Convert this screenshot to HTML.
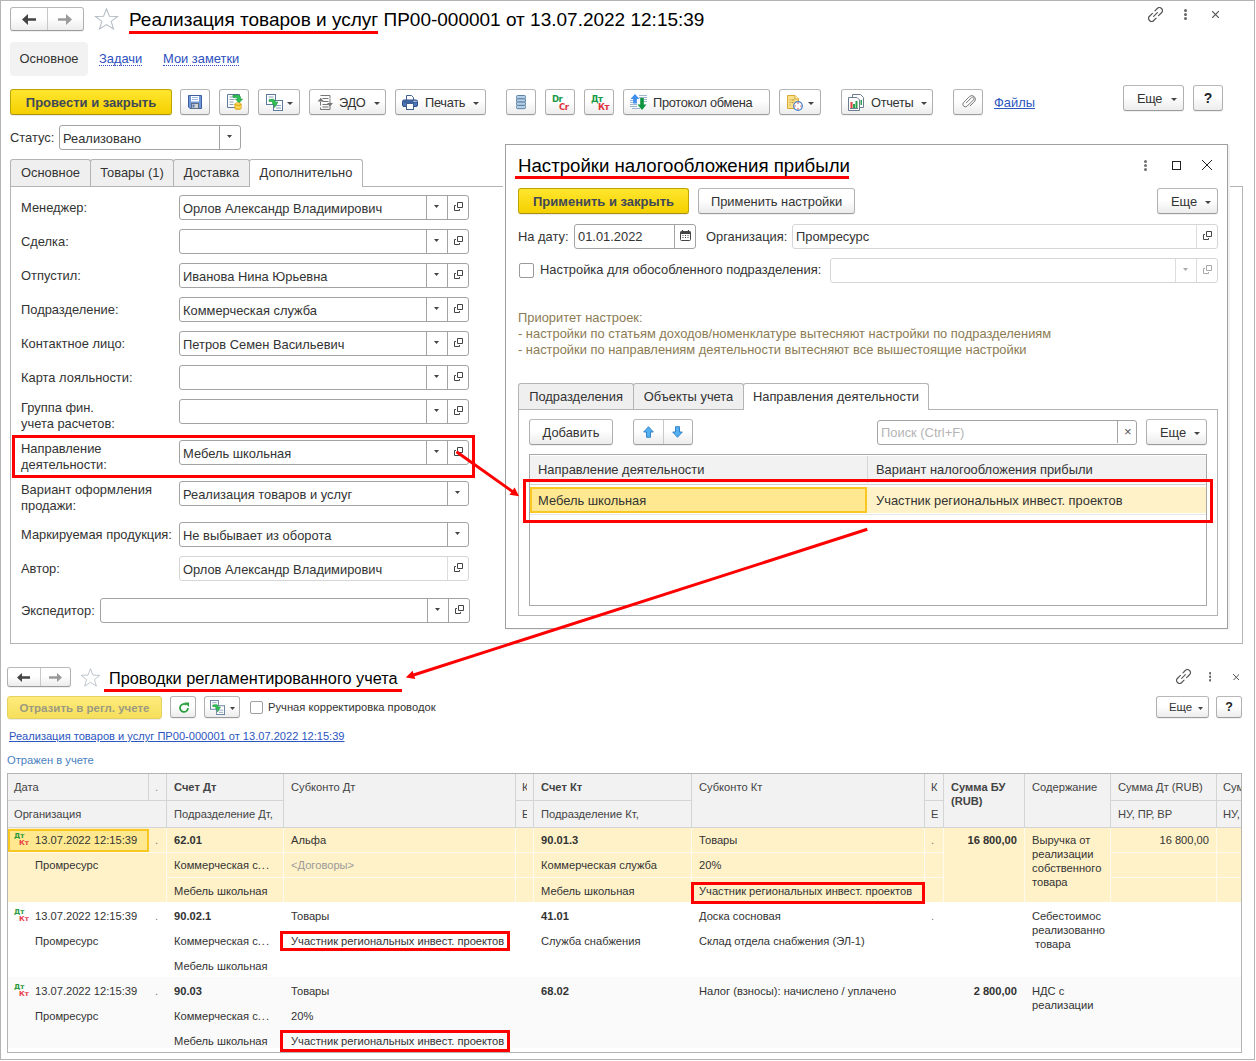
<!DOCTYPE html><html lang="ru"><head><meta charset="utf-8"><title>1C</title><style>
*{box-sizing:border-box;margin:0;padding:0}
html,body{width:1256px;height:1061px;background:#fff;overflow:hidden}
body{font-family:"Liberation Sans",sans-serif;font-size:12.9px;color:#333;position:relative}
.a{position:absolute;white-space:nowrap}
.frame{left:0;top:0;width:1255px;height:1060px;border:1px solid #b4b4b4}
.btn{border:1px solid #b0b0b0;border-top-color:#b8b8b8;border-bottom-color:#9c9c9c;border-radius:3px;background:linear-gradient(#fff,#fff 45%,#ececec);box-shadow:0 1px 0 rgba(0,0,0,.06);text-align:center;color:#333}
.ybtn{border:1px solid #bfa300;border-radius:3px;background:linear-gradient(#ffe62e,#f5d000);box-shadow:0 1px 0 rgba(0,0,0,.08);border-bottom-color:#a89010;text-align:center;font-weight:bold;font-size:13px;color:#3f4858}
.inp{border:1px solid #a8a8a8;border-radius:3px;background:#fff}
.inp .t{position:absolute;left:3px;top:1px;line-height:22px}
.sep{position:absolute;top:0;bottom:0;width:1px;background:#c4c4c4}
.lnk{color:#2c56c0;text-decoration:underline}
.dlnk{color:#2c50c0;border-bottom:1px dotted #2c50c0;line-height:13px}
.tab{border:1px solid #b4b4b4;border-bottom:none;border-radius:3px 3px 0 0;background:#efefef;text-align:center;line-height:25px}
.tab.act{background:#fff}
.red{border:3px solid #ff0000}
.arr{position:absolute;width:0;height:0;border-left:3.5px solid transparent;border-right:3.5px solid transparent;border-top:4px solid #555}
</style></head><body>
<div class="a frame"></div>
<div class="a btn" style="left:10px;top:7px;width:74px;height:24px;"><span class="sep" style="left:36px;background:#c8c8c8"></span><svg class="a" style="left:11px;top:6px" width="14" height="11" viewBox="0 0 14 11"><path d="M0 5.5L6.0 0V4.3H14V6.7H6.0V11z" fill="#444"/></svg><svg class="a" style="left:47px;top:6px" width="14" height="11" viewBox="0 0 14 11"><path d="M0 5.5L6.0 0V4.3H14V6.7H6.0V11z" fill="#9a9a9a" transform="translate(14,0) scale(-1,1)"/></svg></div>
<svg class="a" style="left:94px;top:8px" width="25" height="22" viewBox="0 0 24 22" preserveAspectRatio="none"><path d="M12 0.800l2.800 7.400 7.900 0.300-6.200 4.900 2.200 7.600L12 16.600 5.300 21l2.200-7.600L1.300 8.500l7.900-0.300z" fill="#fff" stroke="#b4bcc4" stroke-width="1"/></svg>
<div class="a " style="left:129px;top:8px;font-size:19px;line-height:24px;color:#000">Реализация товаров и услуг ПР00-000001 от 13.07.2022 12:15:39</div>
<div class="a " style="left:129px;top:31px;width:249px;height:3px;background:#ff0000"></div>
<svg class="a" style="left:1148px;top:7px" width="15" height="15" viewBox="-1 -1 17 17"><g transform="translate(7.5,7.5) rotate(-45)" fill="none" stroke="#555" stroke-width="1.38" stroke-linecap="round"><path d="M-1.500 -3.400H-6.200A3.400 3.400 0 0 0 -6.200 3.400H-2.500"/><path d="M1.500 3.400H6.200A3.400 3.400 0 0 0 6.200 -3.400H2.500"/><path d="M-3 0H3"/></g></svg>
<svg class="a" style="left:1184px;top:9.2px" width="3.0" height="11.0" viewBox="0 0 3.0 11.0"><circle cx="1.5" cy="1.5" r="1.5" fill="#666"/><circle cx="1.5" cy="5.5" r="1.5" fill="#666"/><circle cx="1.5" cy="9.5" r="1.5" fill="#666"/></svg>
<svg class="a" style="left:1212px;top:11px" width="7" height="7" viewBox="0 0 7 7"><path d="M0 0L7 7M7 0L0 7" stroke="#555" stroke-width="1.2"/></svg>
<div class="a " style="left:10px;top:42px;width:78px;height:34px;background:#f2f2f2;border-radius:4px;text-align:center;line-height:34px;color:#333">Основное</div>
<div class="a dlnk" style="left:99px;top:52px;">Задачи</div>
<div class="a dlnk" style="left:163px;top:52px;">Мои заметки</div>
<div class="a ybtn" style="left:10px;top:89px;width:162px;height:26px;line-height:25px">Провести и закрыть</div>
<div class="a btn" style="left:180px;top:89px;width:30px;height:26px;"><svg class="a" style="left:7px;top:5px" width="14" height="14" viewBox="0 0 14 14"><path d="M0.500 0.500h13v13h-11.500l-1.500-1.500z" fill="#6f98d8" stroke="#3d5f9e"/><rect x="3" y="1" width="8" height="5.500" fill="#fff"/><path d="M4 2.500h6M4 4.500h6" stroke="#9db8e4" stroke-width="1"/><rect x="3.500" y="8.500" width="7" height="5" fill="#d4d4d4" stroke="#5f6f85" stroke-width="1"/><rect x="4.500" y="9.500" width="2" height="3" fill="#5a7ab8"/></svg></div>
<div class="a btn" style="left:219px;top:89px;width:30px;height:26px;"><svg class="a" style="left:7px;top:4px" width="16" height="16" viewBox="0 0 16 16"><path d="M0.5 0.5h12v13h-12z" fill="#fff" stroke="#5d7a9e"/><path d="M2.5 3h4M2.5 5.5h5M2.5 8h4M2.5 10.500h4" stroke="#8aa0b8" stroke-width="1"/><path d="M6 1h4.500c2 0 3 1.200 3 3v1h2l-3.500 4-3.500-4h2v-0.800c0-0.500-0.300-0.700-0.800-0.700H6z" fill="#2fc053" stroke="#16903a" stroke-width="0.600"/><ellipse cx="11" cy="10" rx="3.200" ry="1.300" fill="#ffe070" stroke="#d4a010" stroke-width="0.700"/><path d="M7.800 10v4.200c0 0.800 1.500 1.400 3.200 1.400s3.200-0.600 3.200-1.400V10c0 0.700-1.500 1.300-3.200 1.300S7.800 10.700 7.800 10z" fill="#f6c62c" stroke="#d4a010" stroke-width="0.700"/><path d="M7.800 12c0 0.700 1.500 1.300 3.200 1.300s3.200-0.600 3.200-1.300" fill="none" stroke="#fff0a0" stroke-width="0.700"/></svg></div>
<div class="a btn" style="left:258px;top:89px;width:42px;height:26px;"><svg class="a" style="left:7px;top:4px" width="17" height="17" viewBox="0 0 17 17"><rect x="0.500" y="0.500" width="9" height="10" fill="#fff" stroke="#5d7a9e"/><path d="M2.500 3h5" stroke="#8aa0b8"/><rect x="7.500" y="6.500" width="9" height="10" fill="#fff" stroke="#5d7a9e"/><path d="M10 11.500h5M10 14h5" stroke="#8aa0b8"/><path d="M3.500 5h3c2 0 3 1 3 3v0.500h2.500l-4 5v-2.500c0 0-1.500 0.200-1.500-2V8c0-0.500-0.300-1-1-1h-2z" fill="#2fc053" stroke="#16903a" stroke-width="0.600" transform="rotate(-8 8 9)"/></svg><svg class="a" style="left:28px;top:12px" width="6" height="3" viewBox="0 0 6 3"><path d="M0 0h6l-3 3z" fill="#444"/></svg></div>
<div class="a btn" style="left:309px;top:89px;width:77px;height:26px;"><svg class="a" style="left:6px;top:5px" width="17" height="15" viewBox="0 0 17 15"><g fill="none" stroke="#777" stroke-width="1"><path d="M4.500 0.500h9.500v3"/><path d="M14 10.500v4h-9.500v-2"/><path d="M4.500 3v3"/><path d="M6.500 3.500h6M6.500 6.500h6M6.500 9.500h6M6.500 12h6"/></g><path d="M1.500 6.500h6.500l-3.250-3.500z" fill="#777"/><path d="M4.500 6.500v4" stroke="#777"/><path d="M11 8h6l-3 3.500z" fill="#777"/><path d="M14 4v4" stroke="#777"/></svg><span class="a" style="left:29px;top:4px;line-height:16px;font-size:12.8px;margin-top:1px;letter-spacing:-0.3px">ЭДО</span><svg class="a" style="left:64px;top:12px" width="6" height="3" viewBox="0 0 6 3"><path d="M0 0h6l-3 3z" fill="#444"/></svg></div>
<div class="a btn" style="left:395px;top:89px;width:91px;height:26px;"><svg class="a" style="left:6px;top:5px" width="16" height="15" viewBox="0 0 16 15"><path d="M4.500 5v-4.500h5l2 2v2.500" fill="#fff" stroke="#3f5f8f"/><rect x="0.500" y="5" width="15" height="6.500" rx="1.500" fill="#4f78b8" stroke="#2f4f85"/><path d="M1.500 7h13" stroke="#2f4f85" stroke-width="1"/><rect x="11.500" y="5.800" width="1.200" height="1" fill="#fff"/><rect x="13.300" y="5.800" width="1.200" height="1" fill="#fff"/><rect x="4.500" y="8.500" width="7" height="6" fill="#fff" stroke="#3f5f8f"/></svg><span class="a" style="left:29px;top:4px;line-height:16px;font-size:12.8px;margin-top:1px;letter-spacing:-0.3px">Печать</span><svg class="a" style="left:77px;top:12px" width="6" height="3" viewBox="0 0 6 3"><path d="M0 0h6l-3 3z" fill="#444"/></svg></div>
<div class="a btn" style="left:506px;top:89px;width:30px;height:26px;"><svg class="a" style="left:9px;top:5px" width="10" height="14.5" viewBox="0 0 10 14.5"><rect x="0.500" y="0.5" width="9" height="3.300" rx="1" fill="#b5cfe6" stroke="#5d80a5" stroke-width="1"/><rect x="0.500" y="3.8" width="9" height="3.300" rx="1" fill="#b5cfe6" stroke="#5d80a5" stroke-width="1"/><rect x="0.500" y="7.1" width="9" height="3.300" rx="1" fill="#b5cfe6" stroke="#5d80a5" stroke-width="1"/><rect x="0.500" y="10.4" width="9" height="3.300" rx="1" fill="#b5cfe6" stroke="#5d80a5" stroke-width="1"/></svg></div>
<div class="a btn" style="left:545px;top:89px;width:30px;height:26px;"><div class="a" style="left:6px;top:5px;font-size:8.5px;line-height:9px;font-weight:bold;font-family:'DejaVu Sans','Liberation Sans',sans-serif;letter-spacing:-0.5px"><span style="position:absolute;left:0;top:0;color:#179a45">Dr</span><span style="position:absolute;left:7px;top:8px;color:#e0323c">Cr</span></div></div>
<div class="a btn" style="left:584px;top:89px;width:30px;height:26px;"><div class="a" style="left:6px;top:5px;font-size:8.5px;line-height:9px;font-weight:bold;font-family:'DejaVu Sans','Liberation Sans',sans-serif;letter-spacing:-0.5px"><span style="position:absolute;left:0;top:0;color:#179a45">Дт</span><span style="position:absolute;left:7px;top:8px;color:#e0323c">Кт</span></div></div>
<div class="a btn" style="left:623px;top:89px;width:147px;height:26px;"><svg class="a" style="left:6px;top:4px" width="17" height="16" viewBox="0 0 17 16"><path d="M0 6.500h7M0 8.500h7M0 10.500h7M0 12.500h7M2 14.500h8" stroke="#9fb6cf" stroke-width="1"/><path d="M9 1.500h8M9 3.500h8M12 5.500h5M12 7.500h5" stroke="#9fb6cf" stroke-width="1"/><path d="M5 0l4.500 5h-2.700v4.500h-3.600V5H0.500z" fill="#3f8ff0"/><path d="M12 16l4.500-5.500h-2.700V4h-3.600v6.500H7.500z" fill="#0f9540"/></svg><span class="a" style="left:29px;top:4px;line-height:16px;font-size:12.8px;margin-top:1px;letter-spacing:-0.3px">Протокол обмена</span></div>
<div class="a btn" style="left:779px;top:89px;width:42px;height:26px;"><svg class="a" style="left:7px;top:5px" width="16" height="16" viewBox="0 0 16 16"><path d="M0.500 0.500h7.500l3.500 3.500v9.500h-11z" fill="#fbe08a" stroke="#d9a93a"/><path d="M8 0.500v3.500h3.500" fill="#fff4c0" stroke="#d9a93a"/><path d="M2.500 5h1M4.500 5h3M2.500 7.500h1M4.500 7.500h2M2.500 10h1" stroke="#b8903a" stroke-width="1"/><circle cx="11" cy="11" r="4.300" fill="#fff" stroke="#3f7fd0" stroke-width="1.200"/><path d="M11 7.500v1.200M11 13.300v1.200M7.500 11h1.200M13.300 11h1.200" stroke="#e03030" stroke-width="1.200"/></svg><svg class="a" style="left:28px;top:12px" width="6" height="3" viewBox="0 0 6 3"><path d="M0 0h6l-3 3z" fill="#444"/></svg></div>
<div class="a btn" style="left:841px;top:89px;width:92px;height:26px;"><svg class="a" style="left:6px;top:4px" width="16" height="17" viewBox="0 0 16 17"><path d="M4.500 0.500h8l3 3v10h-11z" fill="#fff" stroke="#6d7d90"/><path d="M0.500 3.500h8.500l2.500 2.500v10.500h-11z" fill="#fff" stroke="#6d7d90"/><rect x="2.500" y="8" width="2" height="6" fill="#e04040"/><rect x="5" y="10" width="2" height="4" fill="#2fa050"/><rect x="7.500" y="7" width="2" height="7" fill="#2fa050"/><rect x="12.500" y="6" width="1.500" height="5" fill="#2fa050"/><path d="M2 14.500h8" stroke="#6d7d90" stroke-width="1"/></svg><span class="a" style="left:29px;top:4px;line-height:16px;font-size:12.8px;margin-top:1px;letter-spacing:-0.3px">Отчеты</span><svg class="a" style="left:79px;top:12px" width="6" height="3" viewBox="0 0 6 3"><path d="M0 0h6l-3 3z" fill="#444"/></svg></div>
<div class="a btn" style="left:953px;top:89px;width:30px;height:26px;"><svg class="a" style="left:8px;top:5px" width="13.5" height="13.5" viewBox="0 0 15 15"><path d="M4 9.500l6-6a1.600 1.600 0 0 1 2.300 2.300l-7 7a2.800 2.800 0 0 1-4-4l7-7a4 4 0 0 1 5.500 5.500l-5.500 5.500" fill="none" stroke="#777" stroke-width="1.100" transform="translate(0.5,-0.500)"/></svg></div>
<div class="a btn" style="left:1123px;top:85px;width:61px;height:26px;"><span class="a" style="left:13px;top:4px;line-height:16px;font-size:12.8px;margin-top:1px;letter-spacing:-0.3px">Еще</span><svg class="a" style="left:47px;top:12px" width="6" height="3" viewBox="0 0 6 3"><path d="M0 0h6l-3 3z" fill="#444"/></svg></div>
<div class="a btn" style="left:1193px;top:85px;width:30px;height:26px;line-height:24px;font-weight:bold;font-size:14px;color:#222">?</div>
<div class="a lnk" style="left:994px;top:95px;line-height:16px">Файлы</div>
<div class="a " style="left:10px;top:130px;line-height:16px">Статус:</div>
<div class="a inp" style="left:59px;top:125px;width:182px;height:25px;border-color:#a3a3a3;"><span class="t" style="line-height:23px;top:1px">Реализовано</span><span class="sep" style="left:159px;background:#a3a3a3"></span><svg class="a" style="left:167px;top:9px" width="5" height="3" viewBox="0 0 5 3"><path d="M0 0h5l-2.500 3z" fill="#444"/></svg></div>
<div class="a " style="left:10px;top:186px;width:1233px;height:458px;border:1px solid #b4b4b4;background:#fff"></div>
<div class="a tab" style="left:10px;top:159px;width:81px;height:27px;">Основное</div>
<div class="a tab" style="left:90px;top:159px;width:84px;height:27px;">Товары (1)</div>
<div class="a tab" style="left:173px;top:159px;width:77px;height:27px;">Доставка</div>
<div class="a tab act" style="left:249px;top:159px;width:114px;height:28px;">Дополнительно</div>
<div class="a " style="left:21px;top:200px;line-height:16px">Менеджер:</div>
<div class="a inp" style="left:179px;top:195px;width:290px;height:25px;border-color:#a3a3a3;"><span class="t" style="line-height:23px;top:1px">Орлов Александр Владимирович</span><span class="sep" style="left:267px;background:#a3a3a3"></span><svg class="a" style="left:274px;top:6px" width="9" height="9" viewBox="0 0 9 9"><path d="M3.5 0.5h5v5h-5z" fill="none" stroke="#444" stroke-width="1"/><path d="M2 3.500h-1.500v5h5v-1.500" fill="none" stroke="#444" stroke-width="1"/></svg><span class="sep" style="left:246px;background:#a3a3a3"></span><svg class="a" style="left:254px;top:9px" width="5" height="3" viewBox="0 0 5 3"><path d="M0 0h5l-2.500 3z" fill="#444"/></svg></div>
<div class="a " style="left:21px;top:234px;line-height:16px">Сделка:</div>
<div class="a inp" style="left:179px;top:229px;width:290px;height:25px;border-color:#a3a3a3;"><span class="t" style="line-height:23px;top:1px"></span><span class="sep" style="left:267px;background:#a3a3a3"></span><svg class="a" style="left:274px;top:6px" width="9" height="9" viewBox="0 0 9 9"><path d="M3.5 0.5h5v5h-5z" fill="none" stroke="#444" stroke-width="1"/><path d="M2 3.500h-1.500v5h5v-1.500" fill="none" stroke="#444" stroke-width="1"/></svg><span class="sep" style="left:246px;background:#a3a3a3"></span><svg class="a" style="left:254px;top:9px" width="5" height="3" viewBox="0 0 5 3"><path d="M0 0h5l-2.500 3z" fill="#444"/></svg></div>
<div class="a " style="left:21px;top:268px;line-height:16px">Отпустил:</div>
<div class="a inp" style="left:179px;top:263px;width:290px;height:25px;border-color:#a3a3a3;"><span class="t" style="line-height:23px;top:1px">Иванова Нина Юрьевна</span><span class="sep" style="left:267px;background:#a3a3a3"></span><svg class="a" style="left:274px;top:6px" width="9" height="9" viewBox="0 0 9 9"><path d="M3.5 0.5h5v5h-5z" fill="none" stroke="#444" stroke-width="1"/><path d="M2 3.500h-1.500v5h5v-1.500" fill="none" stroke="#444" stroke-width="1"/></svg><span class="sep" style="left:246px;background:#a3a3a3"></span><svg class="a" style="left:254px;top:9px" width="5" height="3" viewBox="0 0 5 3"><path d="M0 0h5l-2.500 3z" fill="#444"/></svg></div>
<div class="a " style="left:21px;top:302px;line-height:16px">Подразделение:</div>
<div class="a inp" style="left:179px;top:297px;width:290px;height:25px;border-color:#a3a3a3;"><span class="t" style="line-height:23px;top:1px">Коммерческая служба</span><span class="sep" style="left:267px;background:#a3a3a3"></span><svg class="a" style="left:274px;top:6px" width="9" height="9" viewBox="0 0 9 9"><path d="M3.5 0.5h5v5h-5z" fill="none" stroke="#444" stroke-width="1"/><path d="M2 3.500h-1.500v5h5v-1.500" fill="none" stroke="#444" stroke-width="1"/></svg><span class="sep" style="left:246px;background:#a3a3a3"></span><svg class="a" style="left:254px;top:9px" width="5" height="3" viewBox="0 0 5 3"><path d="M0 0h5l-2.500 3z" fill="#444"/></svg></div>
<div class="a " style="left:21px;top:336px;line-height:16px">Контактное лицо:</div>
<div class="a inp" style="left:179px;top:331px;width:290px;height:25px;border-color:#a3a3a3;"><span class="t" style="line-height:23px;top:1px">Петров Семен Васильевич</span><span class="sep" style="left:267px;background:#a3a3a3"></span><svg class="a" style="left:274px;top:6px" width="9" height="9" viewBox="0 0 9 9"><path d="M3.5 0.5h5v5h-5z" fill="none" stroke="#444" stroke-width="1"/><path d="M2 3.500h-1.500v5h5v-1.500" fill="none" stroke="#444" stroke-width="1"/></svg><span class="sep" style="left:246px;background:#a3a3a3"></span><svg class="a" style="left:254px;top:9px" width="5" height="3" viewBox="0 0 5 3"><path d="M0 0h5l-2.500 3z" fill="#444"/></svg></div>
<div class="a " style="left:21px;top:370px;line-height:16px">Карта лояльности:</div>
<div class="a inp" style="left:179px;top:365px;width:290px;height:25px;border-color:#a3a3a3;"><span class="t" style="line-height:23px;top:1px"></span><span class="sep" style="left:267px;background:#a3a3a3"></span><svg class="a" style="left:274px;top:6px" width="9" height="9" viewBox="0 0 9 9"><path d="M3.5 0.5h5v5h-5z" fill="none" stroke="#444" stroke-width="1"/><path d="M2 3.500h-1.500v5h5v-1.500" fill="none" stroke="#444" stroke-width="1"/></svg><span class="sep" style="left:246px;background:#a3a3a3"></span><svg class="a" style="left:254px;top:9px" width="5" height="3" viewBox="0 0 5 3"><path d="M0 0h5l-2.500 3z" fill="#444"/></svg></div>
<div class="a " style="left:21px;top:400px;line-height:16px">Группа фин.<br>учета расчетов:</div>
<div class="a inp" style="left:179px;top:399px;width:290px;height:25px;border-color:#a3a3a3;"><span class="t" style="line-height:23px;top:1px"></span><span class="sep" style="left:267px;background:#a3a3a3"></span><svg class="a" style="left:274px;top:6px" width="9" height="9" viewBox="0 0 9 9"><path d="M3.5 0.5h5v5h-5z" fill="none" stroke="#444" stroke-width="1"/><path d="M2 3.500h-1.500v5h5v-1.500" fill="none" stroke="#444" stroke-width="1"/></svg><span class="sep" style="left:246px;background:#a3a3a3"></span><svg class="a" style="left:254px;top:9px" width="5" height="3" viewBox="0 0 5 3"><path d="M0 0h5l-2.500 3z" fill="#444"/></svg></div>
<div class="a " style="left:21px;top:441px;line-height:16px">Направление<br>деятельности:</div>
<div class="a inp" style="left:179px;top:440px;width:290px;height:25px;border-color:#a3a3a3;"><span class="t" style="line-height:23px;top:1px">Мебель школьная</span><span class="sep" style="left:267px;background:#a3a3a3"></span><svg class="a" style="left:274px;top:6px" width="9" height="9" viewBox="0 0 9 9"><path d="M3.5 0.5h5v5h-5z" fill="none" stroke="#444" stroke-width="1"/><path d="M2 3.500h-1.500v5h5v-1.500" fill="none" stroke="#444" stroke-width="1"/></svg><span class="sep" style="left:246px;background:#a3a3a3"></span><svg class="a" style="left:254px;top:9px" width="5" height="3" viewBox="0 0 5 3"><path d="M0 0h5l-2.500 3z" fill="#444"/></svg></div>
<div class="a " style="left:21px;top:482px;line-height:16px">Вариант оформления<br>продажи:</div>
<div class="a inp" style="left:179px;top:481px;width:290px;height:25px;border-color:#a3a3a3;"><span class="t" style="line-height:23px;top:1px">Реализация товаров и услуг</span><span class="sep" style="left:267px;background:#a3a3a3"></span><svg class="a" style="left:275px;top:9px" width="5" height="3" viewBox="0 0 5 3"><path d="M0 0h5l-2.500 3z" fill="#444"/></svg></div>
<div class="a " style="left:21px;top:527px;line-height:16px">Маркируемая продукция:</div>
<div class="a inp" style="left:179px;top:522px;width:290px;height:25px;border-color:#a3a3a3;"><span class="t" style="line-height:23px;top:1px">Не выбывает из оборота</span><span class="sep" style="left:267px;background:#a3a3a3"></span><svg class="a" style="left:275px;top:9px" width="5" height="3" viewBox="0 0 5 3"><path d="M0 0h5l-2.500 3z" fill="#444"/></svg></div>
<div class="a " style="left:21px;top:561px;line-height:16px">Автор:</div>
<div class="a inp" style="left:179px;top:556px;width:290px;height:25px;border-color:#d6d6d6;"><span class="t" style="line-height:23px;top:1px">Орлов Александр Владимирович</span><span class="sep" style="left:267px;background:#dcdcdc"></span><svg class="a" style="left:274px;top:6px" width="9" height="9" viewBox="0 0 9 9"><path d="M3.5 0.5h5v5h-5z" fill="none" stroke="#444" stroke-width="1"/><path d="M2 3.500h-1.500v5h5v-1.500" fill="none" stroke="#444" stroke-width="1"/></svg></div>
<div class="a " style="left:21px;top:603px;line-height:16px">Экспедитор:</div>
<div class="a inp" style="left:100px;top:598px;width:370px;height:25px;border-color:#a3a3a3;"><span class="t" style="line-height:23px;top:1px"></span><span class="sep" style="left:347px;background:#a3a3a3"></span><svg class="a" style="left:354px;top:6px" width="9" height="9" viewBox="0 0 9 9"><path d="M3.5 0.5h5v5h-5z" fill="none" stroke="#444" stroke-width="1"/><path d="M2 3.500h-1.500v5h5v-1.500" fill="none" stroke="#444" stroke-width="1"/></svg><span class="sep" style="left:326px;background:#a3a3a3"></span><svg class="a" style="left:334px;top:9px" width="5" height="3" viewBox="0 0 5 3"><path d="M0 0h5l-2.500 3z" fill="#444"/></svg></div>
<div class="a red" style="left:12px;top:435px;width:463px;height:43px;"></div>
<div class="a " style="left:505px;top:144px;width:723px;height:485px;background:#fff;border:1px solid #a0a0a0;box-shadow:2px 1px 0 #f3f3f3,0 0 0 2px #fff"></div>
<div class="a " style="left:518px;top:153.5px;font-size:18.65px;line-height:24px;color:#000">Настройки налогообложения прибыли</div>
<div class="a " style="left:515px;top:176px;width:334px;height:3px;background:#ff0000"></div>
<svg class="a" style="left:1144px;top:160px" width="3.0" height="11.0" viewBox="0 0 3.0 11.0"><circle cx="1.5" cy="1.5" r="1.5" fill="#707070"/><circle cx="1.5" cy="5.5" r="1.5" fill="#707070"/><circle cx="1.5" cy="9.5" r="1.5" fill="#707070"/></svg>
<div class="a " style="left:1172px;top:161px;width:9px;height:9px;border:1px solid #222"></div>
<svg class="a" style="left:1202px;top:160px" width="10" height="10" viewBox="0 0 10 10"><path d="M0 0L10 10M10 0L0 10" stroke="#222" stroke-width="1"/></svg>
<div class="a ybtn" style="left:518px;top:188px;width:171px;height:26px;line-height:25px">Применить и закрыть</div>
<div class="a btn" style="left:698px;top:188px;width:157px;height:26px;line-height:25px">Применить настройки</div>
<div class="a btn" style="left:1157px;top:188px;width:61px;height:26px;"><span style="position:absolute;left:13px;top:0;line-height:25px;font-size:12.9px">Еще</span><svg class="a" style="left:47px;top:12px" width="6" height="3" viewBox="0 0 6 3"><path d="M0 0h6l-3 3z" fill="#444"/></svg></div>
<div class="a " style="left:518px;top:229px;line-height:16px">На дату:</div>
<div class="a inp" style="left:574px;top:224px;width:122px;height:25px;border-color:#a3a3a3;"><span class="t" style="line-height:23px;top:0px">01.01.2022</span><span class="sep" style="left:99px;background:#a3a3a3"></span><svg class="a" style="left:105px;top:5px" width="11" height="11" viewBox="0 0 11 11"><rect x="0.500" y="1.500" width="10" height="9" rx="1" fill="#fff" stroke="#444"/><rect x="0.500" y="1.500" width="10" height="2.500" fill="#444"/><path d="M2.500 0v2M8.500 0v2" stroke="#444" stroke-width="1.200"/><path d="M2.500 5.500h1M5 5.500h1M7.500 5.500h1M2.500 7.500h1M5 7.500h1M7.500 7.500h1" stroke="#444" stroke-width="1"/></svg></div>
<div class="a " style="left:706px;top:229px;line-height:16px">Организация:</div>
<div class="a inp" style="left:792px;top:224px;width:426px;height:25px;border-color:#d6d6d6;"><span class="t" style="line-height:23px;top:0px">Промресурс</span><span class="sep" style="left:403px;background:#dcdcdc"></span><svg class="a" style="left:410px;top:6px" width="9" height="9" viewBox="0 0 9 9"><path d="M3.5 0.5h5v5h-5z" fill="none" stroke="#444" stroke-width="1"/><path d="M2 3.500h-1.500v5h5v-1.500" fill="none" stroke="#444" stroke-width="1"/></svg></div>
<div class="a " style="left:519px;top:263px;width:15px;height:15px;border:1px solid #9a9a9a;border-radius:2px;background:#fff"></div>
<div class="a " style="left:540px;top:262px;line-height:16px">Настройка для обособленного подразделения:</div>
<div class="a inp" style="left:830px;top:258px;width:388px;height:25px;border-color:#d6d6d6;"><span class="t" style="line-height:23px;top:1px"></span><span class="sep" style="left:365px;background:#dcdcdc"></span><svg class="a" style="left:372px;top:6px" width="9" height="9" viewBox="0 0 9 9"><path d="M3.5 0.5h5v5h-5z" fill="none" stroke="#a8a8a8" stroke-width="1"/><path d="M2 3.500h-1.500v5h5v-1.500" fill="none" stroke="#a8a8a8" stroke-width="1"/></svg><span class="sep" style="left:344px;background:#dcdcdc"></span><svg class="a" style="left:352px;top:9px" width="5" height="3" viewBox="0 0 5 3"><path d="M0 0h5l-2.500 3z" fill="#a8a8a8"/></svg></div>
<div class="a " style="left:518px;top:310px;line-height:16px;color:#8c7b52">Приоритет настроек:<br>- настройки по статьям доходов/номенклатуре вытесняют настройки по подразделениям<br>- настройки по направлениям деятельности вытесняют все вышестоящие настройки</div>
<div class="a " style="left:518px;top:409px;width:700px;height:207px;border:1px solid #b4b4b4;background:#fff"></div>
<div class="a tab" style="left:518px;top:383px;width:116px;height:26px;">Подразделения</div>
<div class="a tab" style="left:633px;top:383px;width:111px;height:26px;">Объекты учета</div>
<div class="a tab act" style="left:743px;top:383px;width:186px;height:27px;">Направления деятельности</div>
<div class="a btn" style="left:529px;top:419px;width:84px;height:26px;line-height:25px">Добавить</div>
<div class="a btn" style="left:633px;top:419px;width:60px;height:26px;"><span class="sep" style="left:29px;background:#c8c8c8"></span><svg class="a" style="left:9px;top:6px" width="11" height="12" viewBox="0 0 11 12"><path d="M5.500 0.700l4.800 5.300h-2.800v5.300h-4v-5.300H0.700z" fill="#55b0f2" stroke="#2a7cc4" stroke-width="0.900"/></svg><svg class="a" style="left:38px;top:6px" width="11" height="12" viewBox="0 0 11 12"><path d="M5.500 11.300l4.800-5.300h-2.800V0.700h-4v5.300H0.700z" fill="#55b0f2" stroke="#2a7cc4" stroke-width="0.900"/></svg></div>
<div class="a inp" style="left:877px;top:420px;width:260px;height:25px;border-color:#a3a3a3;"><span class="t" style="line-height:23px;top:0px"><span style="color:#b4b4b4">Поиск (Ctrl+F)</span><span class="sep" style="left:236px;top:-1px;height:23px;background:#a3a3a3"></span><span style="position:absolute;left:243px;top:-1px;color:#555;font-size:13px">×</span></span></div>
<div class="a btn" style="left:1146px;top:419px;width:61px;height:26px;"><span style="position:absolute;left:13px;top:0;line-height:25px;font-size:12.9px">Еще</span><svg class="a" style="left:47px;top:12px" width="6" height="3" viewBox="0 0 6 3"><path d="M0 0h6l-3 3z" fill="#444"/></svg></div>
<div class="a " style="left:529px;top:454px;width:678px;height:152px;border:1px solid #a8a8a8;background:#fff"></div>
<div class="a " style="left:530px;top:456px;width:676px;height:27px;background:#f2f2f2"></div>
<div class="a " style="left:867px;top:456px;width:1px;height:27px;background:#d6d6d6"></div>
<div class="a " style="left:530px;top:484px;width:676px;height:1px;background:#d0d0d0"></div>
<div class="a " style="left:530px;top:514px;width:676px;height:1px;background:#e6e6e6"></div>
<div class="a " style="left:538px;top:462px;line-height:16px">Направление деятельности</div>
<div class="a " style="left:876px;top:462px;line-height:16px">Вариант налогообложения прибыли</div>
<div class="a " style="left:530px;top:487px;width:676px;height:26px;background:#fff2c8"></div>
<div class="a " style="left:530px;top:487px;width:337px;height:26px;background:#ffe88f;border:2px solid #f8c820"></div>
<div class="a " style="left:538px;top:493px;line-height:16px">Мебель школьная</div>
<div class="a " style="left:876px;top:493px;line-height:16px">Участник региональных инвест. проектов</div>
<div class="a red" style="left:523px;top:479px;width:690px;height:44px;"></div>
<div class="a btn" style="left:7px;top:667px;width:64px;height:20px;"><span class="sep" style="left:32px;background:#c8c8c8"></span><svg class="a" style="left:9px;top:5px" width="13" height="9" viewBox="0 0 13 9"><path d="M0 4.5L5.0 0V3.3H13V5.7H5.0V9z" fill="#444"/></svg><svg class="a" style="left:41px;top:5px" width="13" height="9" viewBox="0 0 13 9"><path d="M0 4.5L5.0 0V3.3H13V5.7H5.0V9z" fill="#9a9a9a" transform="translate(13,0) scale(-1,1)"/></svg></div>
<svg class="a" style="left:80px;top:668px" width="21" height="19" viewBox="0 0 24 22" preserveAspectRatio="none"><path d="M12 0.800l2.800 7.400 7.900 0.300-6.200 4.900 2.200 7.600L12 16.600 5.300 21l2.200-7.600L1.300 8.500l7.900-0.300z" fill="#fff" stroke="#b4bcc4" stroke-width="1"/></svg>
<div class="a " style="left:109px;top:666.5px;font-size:16.3px;line-height:22px;color:#000">Проводки регламентированного учета</div>
<div class="a " style="left:104px;top:689px;width:298px;height:3px;background:#ff0000"></div>
<svg class="a" style="left:1176px;top:669px" width="15" height="15" viewBox="-1 -1 17 17"><g transform="translate(7.5,7.5) rotate(-45)" fill="none" stroke="#555" stroke-width="1.27" stroke-linecap="round"><path d="M-1.500 -3.400H-6.200A3.400 3.400 0 0 0 -6.200 3.400H-2.500"/><path d="M1.500 3.400H6.200A3.400 3.400 0 0 0 6.200 -3.400H2.500"/><path d="M-3 0H3"/></g></svg>
<svg class="a" style="left:1208.6px;top:672px" width="2.6" height="9.6" viewBox="0 0 2.6 9.6"><circle cx="1.3" cy="1.3" r="1.3" fill="#666"/><circle cx="1.3" cy="4.8" r="1.3" fill="#666"/><circle cx="1.3" cy="8.3" r="1.3" fill="#666"/></svg>
<svg class="a" style="left:1232.5px;top:673.5px" width="6.5" height="6.5" viewBox="0 0 6.5 6.5"><path d="M0 0L6.5 6.5M6.5 0L0 6.5" stroke="#555" stroke-width="1"/></svg>
<div class="a ybtn" style="left:7px;top:696px;width:155px;height:23px;line-height:22px;font-size:11.5px;color:#9c9a80;background:linear-gradient(#fdeb7c,#f6df5c);border-color:#e6d25e;box-shadow:0 1px 0 rgba(0,0,0,.08)">Отразить в регл. учете</div>
<div class="a btn" style="left:170px;top:696px;width:26px;height:22px;"><svg class="a" style="left:7px;top:5px" width="12" height="12" viewBox="0 0 12 12"><path d="M10 6a4 4 0 1 1-1.500-3.200" fill="none" stroke="#2fa040" stroke-width="1.800"/><path d="M6.500 0.500h4.500v4.500z" fill="#2fa040"/></svg></div>
<div class="a btn" style="left:204px;top:696px;width:36px;height:22px;"><svg class="a" style="left:5px;top:3px" width="15" height="15" viewBox="0 0 17 17"><rect x="0.500" y="0.500" width="9" height="10" fill="#fff" stroke="#5d7a9e"/><path d="M2.500 3h5" stroke="#8aa0b8"/><rect x="7.500" y="6.500" width="9" height="10" fill="#fff" stroke="#5d7a9e"/><path d="M10 11.500h5M10 14h5" stroke="#8aa0b8"/><path d="M3.500 5h3c2 0 3 1 3 3v0.500h2.500l-4 5v-2.500c0 0-1.500 0.200-1.500-2V8c0-0.500-0.300-1-1-1h-2z" fill="#2fc053" stroke="#16903a" stroke-width="0.600" transform="rotate(-8 8 9)"/></svg><svg class="a" style="left:25px;top:10px" width="5" height="3" viewBox="0 0 5 3"><path d="M0 0h5l-2.500 3z" fill="#444"/></svg></div>
<div class="a " style="left:250px;top:701px;width:13px;height:13px;border:1px solid #a0a0a0;border-radius:2px;background:#fff"></div>
<div class="a " style="left:268px;top:700px;line-height:14px;font-size:11.2px;">Ручная корректировка проводок</div>
<div class="a btn" style="left:1156px;top:696px;width:53px;height:22px;"><span class="a" style="left:12px;top:3px;line-height:14px;font-size:11.4px">Еще</span><svg class="a" style="left:41px;top:10px" width="5" height="3" viewBox="0 0 5 3"><path d="M0 0h5l-2.500 3z" fill="#444"/></svg></div>
<div class="a btn" style="left:1216px;top:696px;width:26px;height:22px;line-height:21px;font-weight:bold;font-size:12.5px;color:#222">?</div>
<div class="a lnk" style="left:9px;top:729px;line-height:14px;font-size:11.08px">Реализация товаров и услуг ПР00-000001 от 13.07.2022 12:15:39</div>
<div class="a " style="left:7px;top:753px;line-height:14px;font-size:11.2px;color:#4a7fc0">Отражен в учете</div>
<div class="a " style="left:7px;top:773px;width:1235px;height:280px;border:1px solid #b4b4b4;background:#fff"></div>
<div class="a " style="left:8px;top:774px;width:1233px;height:54px;background:#f2f2f2"></div>
<div class="a " style="left:148px;top:774px;width:1px;height:54px;background:#d4d4d4"></div>
<div class="a " style="left:166px;top:774px;width:1px;height:54px;background:#d4d4d4"></div>
<div class="a " style="left:283px;top:774px;width:1px;height:54px;background:#d4d4d4"></div>
<div class="a " style="left:515px;top:774px;width:1px;height:54px;background:#d4d4d4"></div>
<div class="a " style="left:533px;top:774px;width:1px;height:54px;background:#d4d4d4"></div>
<div class="a " style="left:691px;top:774px;width:1px;height:54px;background:#d4d4d4"></div>
<div class="a " style="left:924px;top:774px;width:1px;height:54px;background:#d4d4d4"></div>
<div class="a " style="left:943px;top:774px;width:1px;height:54px;background:#d4d4d4"></div>
<div class="a " style="left:1024px;top:774px;width:1px;height:54px;background:#d4d4d4"></div>
<div class="a " style="left:1110px;top:774px;width:1px;height:54px;background:#d4d4d4"></div>
<div class="a " style="left:1216px;top:774px;width:1px;height:54px;background:#d4d4d4"></div>
<div class="a " style="left:8px;top:800px;width:275px;height:1px;background:#d4d4d4"></div>
<div class="a " style="left:516px;top:800px;width:175px;height:1px;background:#d4d4d4"></div>
<div class="a " style="left:925px;top:800px;width:18px;height:1px;background:#d4d4d4"></div>
<div class="a " style="left:1111px;top:800px;width:130px;height:1px;background:#d4d4d4"></div>
<div class="a " style="left:148px;top:801px;width:1px;height:26px;background:#f2f2f2"></div>
<div class="a " style="left:8px;top:827px;width:1233px;height:1px;background:#d4d4d4"></div>
<div class="a " style="left:14px;top:780px;font-size:11.15px;line-height:14px;color:#444;">Дата</div>
<div class="a " style="left:155px;top:780px;font-size:11.15px;line-height:14px;color:#888;">.</div>
<div class="a " style="left:174px;top:780px;font-size:11.15px;line-height:14px;color:#444;font-weight:bold">Счет Дт</div>
<div class="a " style="left:291px;top:780px;font-size:11.15px;line-height:14px;color:#444;">Субконто Дт</div>
<div class="a " style="left:516px;top:780px;width:11px;height:14px;font-size:11.15px;line-height:14px;color:#444;overflow:hidden"><span style="position:absolute;left:6px">К</span></div>
<div class="a " style="left:516px;top:807px;width:11px;height:14px;font-size:11.15px;line-height:14px;color:#444;overflow:hidden"><span style="position:absolute;left:6px">Е</span></div>
<div class="a " style="left:541px;top:780px;font-size:11.15px;line-height:14px;color:#444;font-weight:bold">Счет Кт</div>
<div class="a " style="left:699px;top:780px;font-size:11.15px;line-height:14px;color:#444;">Субконто Кт</div>
<div class="a " style="left:931px;top:780px;font-size:11.15px;line-height:14px;color:#444;">К</div>
<div class="a " style="left:931px;top:807px;font-size:11.15px;line-height:14px;color:#444;">Е</div>
<div class="a " style="left:951px;top:780px;font-size:11.15px;line-height:14px;color:#444;font-weight:bold">Сумма БУ<br>(RUB)</div>
<div class="a " style="left:1032px;top:780px;font-size:11.15px;line-height:14px;color:#444;">Содержание</div>
<div class="a " style="left:1118px;top:780px;font-size:11.15px;line-height:14px;color:#444;">Сумма Дт (RUB)</div>
<div class="a " style="left:1217px;top:780px;width:24px;height:14px;font-size:11.15px;line-height:14px;color:#444;overflow:hidden"><span style="position:absolute;left:6px">Сум</span></div>
<div class="a " style="left:1217px;top:807px;width:24px;height:14px;font-size:11.15px;line-height:14px;color:#444;overflow:hidden"><span style="position:absolute;left:6px">НУ,</span></div>
<div class="a " style="left:14px;top:807px;font-size:11.15px;line-height:14px;color:#444;">Организация</div>
<div class="a " style="left:174px;top:807px;font-size:11.15px;line-height:14px;color:#444;">Подразделение Дт,</div>
<div class="a " style="left:541px;top:807px;font-size:11.15px;line-height:14px;color:#444;">Подразделение Кт,</div>
<div class="a " style="left:1118px;top:807px;font-size:11.15px;line-height:14px;color:#444;">НУ, ПР, ВР</div>
<div class="a " style="left:8px;top:828px;width:1233px;height:74px;background:#fff2c8"></div>
<div class="a " style="left:166px;top:828px;width:1px;height:74px;background:#fffaf0"></div>
<div class="a " style="left:283px;top:828px;width:1px;height:74px;background:#fffaf0"></div>
<div class="a " style="left:515px;top:828px;width:1px;height:74px;background:#fffaf0"></div>
<div class="a " style="left:533px;top:828px;width:1px;height:74px;background:#fffaf0"></div>
<div class="a " style="left:691px;top:828px;width:1px;height:74px;background:#fffaf0"></div>
<div class="a " style="left:924px;top:828px;width:1px;height:74px;background:#fffaf0"></div>
<div class="a " style="left:943px;top:828px;width:1px;height:74px;background:#fffaf0"></div>
<div class="a " style="left:1024px;top:828px;width:1px;height:74px;background:#fffaf0"></div>
<div class="a " style="left:1110px;top:828px;width:1px;height:74px;background:#fffaf0"></div>
<div class="a " style="left:1216px;top:828px;width:1px;height:74px;background:#fffaf0"></div>
<div class="a " style="left:8px;top:852px;width:935px;height:1px;background:#fffaf0"></div>
<div class="a " style="left:1111px;top:852px;width:130px;height:1px;background:#fffaf0"></div>
<div class="a " style="left:167px;top:877px;width:776px;height:1px;background:#fffaf0"></div>
<div class="a " style="left:1111px;top:877px;width:130px;height:1px;background:#fffaf0"></div>
<div class="a " style="left:8px;top:829px;width:141px;height:23px;background:#ffe88f;border:2px solid #f8c820"></div>
<div class="a " style="left:8px;top:977px;width:1233px;height:71px;background:#fafafa"></div>
<div class="a" style="left:14px;top:833px;font-size:7px;line-height:7px;font-weight:bold;font-family:'DejaVu Sans',sans-serif"><span style="position:absolute;left:0;top:0;color:#2a9a3c">Дт</span><span style="position:absolute;left:5px;top:7px;color:#e8404a">Кт</span></div>
<div class="a " style="left:35px;top:833px;font-size:11.15px;line-height:14px;color:#333;">13.07.2022 12:15:39</div>
<div class="a " style="left:155px;top:833px;font-size:11.15px;line-height:14px;color:#777;">.</div>
<div class="a " style="left:35px;top:858px;font-size:11.15px;line-height:14px;color:#333;">Промресурс</div>
<div class="a " style="left:174px;top:833px;font-size:11.15px;line-height:14px;color:#333;font-weight:bold">62.01</div>
<div class="a " style="left:174px;top:858px;font-size:11.15px;line-height:14px;color:#333;">Коммерческая с<span style="letter-spacing:1px">...</span></div>
<div class="a " style="left:174px;top:884px;font-size:11.15px;line-height:14px;color:#333;">Мебель школьная</div>
<div class="a " style="left:291px;top:833px;font-size:11.15px;line-height:14px;color:#333;">Альфа</div>
<div class="a " style="left:291px;top:858px;font-size:11.15px;line-height:14px;color:#333;"><span style="color:#9a9a9a">&lt;Договоры&gt;</span></div>
<div class="a " style="left:541px;top:833px;font-size:11.15px;line-height:14px;color:#333;font-weight:bold">90.01.3</div>
<div class="a " style="left:541px;top:858px;font-size:11.15px;line-height:14px;color:#333;">Коммерческая служба</div>
<div class="a " style="left:541px;top:884px;font-size:11.15px;line-height:14px;color:#333;">Мебель школьная</div>
<div class="a " style="left:699px;top:833px;font-size:11.15px;line-height:14px;color:#333;">Товары</div>
<div class="a " style="left:699px;top:858px;font-size:11.15px;line-height:14px;color:#333;">20%</div>
<div class="a " style="left:699px;top:884px;font-size:11.15px;line-height:14px;color:#333;">Участник региональных инвест. проектов</div>
<div class="a " style="left:931px;top:833px;font-size:11.15px;line-height:14px;color:#777;">.</div>
<div class="a " style="left:944px;top:833px;width:73px;height:14px;font-size:11.15px;line-height:14px;color:#333;font-weight:bold;text-align:right">16 800,00</div>
<div class="a " style="left:1032px;top:833px;font-size:11.15px;line-height:14px;color:#333;">Выручка от<br>реализации<br>собственного<br>товара</div>
<div class="a " style="left:1111px;top:833px;width:98px;height:14px;font-size:11.15px;line-height:14px;color:#333;text-align:right">16 800,00</div>
<div class="a" style="left:14px;top:909px;font-size:7px;line-height:7px;font-weight:bold;font-family:'DejaVu Sans',sans-serif"><span style="position:absolute;left:0;top:0;color:#2a9a3c">Дт</span><span style="position:absolute;left:5px;top:7px;color:#e8404a">Кт</span></div>
<div class="a " style="left:35px;top:909px;font-size:11.15px;line-height:14px;color:#333;">13.07.2022 12:15:39</div>
<div class="a " style="left:155px;top:909px;font-size:11.15px;line-height:14px;color:#777;">.</div>
<div class="a " style="left:35px;top:934px;font-size:11.15px;line-height:14px;color:#333;">Промресурс</div>
<div class="a " style="left:174px;top:909px;font-size:11.15px;line-height:14px;color:#333;font-weight:bold">90.02.1</div>
<div class="a " style="left:174px;top:934px;font-size:11.15px;line-height:14px;color:#333;">Коммерческая с<span style="letter-spacing:1px">...</span></div>
<div class="a " style="left:174px;top:959px;font-size:11.15px;line-height:14px;color:#333;">Мебель школьная</div>
<div class="a " style="left:291px;top:909px;font-size:11.15px;line-height:14px;color:#333;">Товары</div>
<div class="a " style="left:291px;top:934px;font-size:11.15px;line-height:14px;color:#333;">Участник региональных инвест. проектов</div>
<div class="a " style="left:541px;top:909px;font-size:11.15px;line-height:14px;color:#333;font-weight:bold">41.01</div>
<div class="a " style="left:541px;top:934px;font-size:11.15px;line-height:14px;color:#333;">Служба снабжения</div>
<div class="a " style="left:699px;top:909px;font-size:11.15px;line-height:14px;color:#333;">Доска сосновая</div>
<div class="a " style="left:699px;top:934px;font-size:11.15px;line-height:14px;color:#333;">Склад отдела снабжения (ЭЛ-1)</div>
<div class="a " style="left:931px;top:909px;font-size:11.15px;line-height:14px;color:#777;">.</div>
<div class="a " style="left:1032px;top:909px;font-size:11.15px;line-height:14px;color:#333;">Себестоимос<br>реализованно<br>&nbsp;товара</div>
<div class="a" style="left:14px;top:984px;font-size:7px;line-height:7px;font-weight:bold;font-family:'DejaVu Sans',sans-serif"><span style="position:absolute;left:0;top:0;color:#2a9a3c">Дт</span><span style="position:absolute;left:5px;top:7px;color:#e8404a">Кт</span></div>
<div class="a " style="left:35px;top:984px;font-size:11.15px;line-height:14px;color:#333;">13.07.2022 12:15:39</div>
<div class="a " style="left:155px;top:984px;font-size:11.15px;line-height:14px;color:#777;">.</div>
<div class="a " style="left:35px;top:1009px;font-size:11.15px;line-height:14px;color:#333;">Промресурс</div>
<div class="a " style="left:174px;top:984px;font-size:11.15px;line-height:14px;color:#333;font-weight:bold">90.03</div>
<div class="a " style="left:174px;top:1009px;font-size:11.15px;line-height:14px;color:#333;">Коммерческая с<span style="letter-spacing:1px">...</span></div>
<div class="a " style="left:174px;top:1034px;font-size:11.15px;line-height:14px;color:#333;">Мебель школьная</div>
<div class="a " style="left:291px;top:984px;font-size:11.15px;line-height:14px;color:#333;">Товары</div>
<div class="a " style="left:291px;top:1009px;font-size:11.15px;line-height:14px;color:#333;">20%</div>
<div class="a " style="left:291px;top:1034px;font-size:11.15px;line-height:14px;color:#333;">Участник региональных инвест. проектов</div>
<div class="a " style="left:541px;top:984px;font-size:11.15px;line-height:14px;color:#333;font-weight:bold">68.02</div>
<div class="a " style="left:699px;top:984px;font-size:11.15px;line-height:14px;color:#333;">Налог (взносы): начислено / уплачено</div>
<div class="a " style="left:944px;top:984px;width:73px;height:14px;font-size:11.15px;line-height:14px;color:#333;font-weight:bold;text-align:right">2 800,00</div>
<div class="a " style="left:1032px;top:984px;font-size:11.15px;line-height:14px;color:#333;">НДС с<br>реализации</div>
<div class="a red" style="left:691px;top:882px;width:234px;height:22px;"></div>
<div class="a red" style="left:280px;top:931px;width:230px;height:20px;"></div>
<div class="a red" style="left:280px;top:1030px;width:230px;height:22px;"></div>
<svg class="a" style="left:0;top:0;pointer-events:none" width="1256" height="1061" viewBox="0 0 1256 1061"><line x1="456.5" y1="451.8" x2="513.7" y2="492.4" stroke="#ff0000" stroke-width="3"/><polygon points="519.1,496.2 509.5,494.8 514.6,487.6" fill="#ff0000"/><line x1="867.3" y1="529.3" x2="412.0" y2="675.5" stroke="#ff0000" stroke-width="3"/><polygon points="405.75,677.5 412.6,670.7 415.3,679.1" fill="#ff0000"/></svg>
</body></html>
